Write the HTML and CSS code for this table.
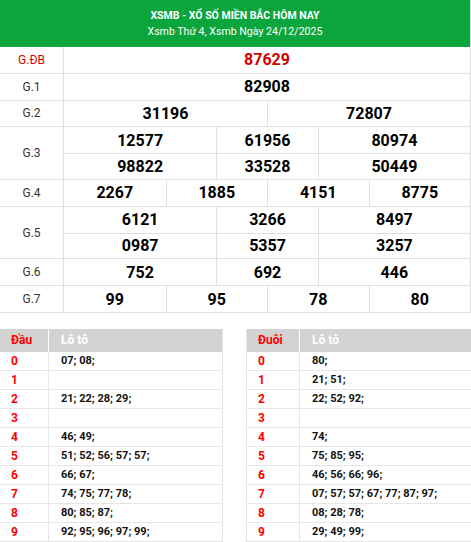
FILE: index.html
```html
<!DOCTYPE html>
<html lang="vi">
<head>
<meta charset="utf-8">
<title>XSMB</title>
<link rel="stylesheet" href="styles.css">
</head>
<body>
<div class="kq">
  <div class="kq-head">
    <div class="kq-title">XSMB - XỔ SỐ MIỀN BẮC HÔM NAY</div>
    <div class="kq-sub">Xsmb Thứ 4, Xsmb Ngày 24/12/2025</div>
  </div>
  <div class="row">
    <div class="label red">G.ĐB</div>
    <div class="nums"><div class="line c1"><span class="num red">87629</span></div></div>
  </div>
  <div class="row">
    <div class="label">G.1</div>
    <div class="nums"><div class="line c1"><span class="num">82908</span></div></div>
  </div>
  <div class="row">
    <div class="label">G.2</div>
    <div class="nums"><div class="line c2"><span class="num">31196</span><span class="num">72807</span></div></div>
  </div>
  <div class="row">
    <div class="label">G.3</div>
    <div class="nums">
      <div class="line c3"><span class="num">12577</span><span class="num">61956</span><span class="num">80974</span></div>
      <div class="line c3"><span class="num">98822</span><span class="num">33528</span><span class="num">50449</span></div>
    </div>
  </div>
  <div class="row">
    <div class="label">G.4</div>
    <div class="nums"><div class="line c4"><span class="num">2267</span><span class="num">1885</span><span class="num">4151</span><span class="num">8775</span></div></div>
  </div>
  <div class="row">
    <div class="label">G.5</div>
    <div class="nums">
      <div class="line c3"><span class="num">6121</span><span class="num">3266</span><span class="num">8497</span></div>
      <div class="line c3"><span class="num">0987</span><span class="num">5357</span><span class="num">3257</span></div>
    </div>
  </div>
  <div class="row">
    <div class="label">G.6</div>
    <div class="nums"><div class="line c3"><span class="num">752</span><span class="num">692</span><span class="num">446</span></div></div>
  </div>
  <div class="row">
    <div class="label">G.7</div>
    <div class="nums"><div class="line c4"><span class="num">99</span><span class="num">95</span><span class="num">78</span><span class="num">80</span></div></div>
  </div>
</div>

<div class="loto-wrap">
  <div class="loto left">
    <div class="th key">Đầu</div><div class="th">Lô tô</div>
    <div class="k">0</div><div class="v">07; 08;</div>
    <div class="k">1</div><div class="v"></div>
    <div class="k">2</div><div class="v">21; 22; 28; 29;</div>
    <div class="k">3</div><div class="v"></div>
    <div class="k">4</div><div class="v">46; 49;</div>
    <div class="k">5</div><div class="v">51; 52; 56; 57; 57;</div>
    <div class="k">6</div><div class="v">66; 67;</div>
    <div class="k">7</div><div class="v">74; 75; 77; 78;</div>
    <div class="k">8</div><div class="v">80; 85; 87;</div>
    <div class="k">9</div><div class="v">92; 95; 96; 97; 99;</div>
  </div>
  <div class="loto right">
    <div class="th key">Đuôi</div><div class="th">Lô tô</div>
    <div class="k">0</div><div class="v">80;</div>
    <div class="k">1</div><div class="v">21; 51;</div>
    <div class="k">2</div><div class="v">22; 52; 92;</div>
    <div class="k">3</div><div class="v"></div>
    <div class="k">4</div><div class="v">74;</div>
    <div class="k">5</div><div class="v">75; 85; 95;</div>
    <div class="k">6</div><div class="v">46; 56; 66; 96;</div>
    <div class="k">7</div><div class="v">07; 57; 57; 67; 77; 87; 97;</div>
    <div class="k">8</div><div class="v">08; 28; 78;</div>
    <div class="k">9</div><div class="v">29; 49; 99;</div>
  </div>
</div>
</body>
</html>
```

FILE: styles.css
```css
* { box-sizing: border-box; }
body {
  margin: 0;
  font-family: Roboto, "Noto Sans", Arial, sans-serif;
  color: #111;
  background: #fff;
}
.kq {
  border-right: 1px solid #dcdcdc;
}
.kq-head {
  background: #0aa53c;
  color: #fff;
  text-align: center;
  padding: 8px 0 7px;
  height: 47px;
}
.kq-title {
  font-size: 10.5px;
  font-weight: 700;
  line-height: 16px;
}
.kq-sub {
  font-size: 10.6px;
  line-height: 16px;
}
.row {
  display: grid;
  grid-template-columns: 64px 1fr;
  border-bottom: 1px solid #e0e0e0;
}
.label {
  display: flex;
  align-items: center;
  justify-content: center;
  font-size: 12px;
  color: #333;
  border-right: 1px solid #e0e0e0;
}
.label.red { color: #e00000; }
.nums { display: flex; flex-direction: column; }
.line {
  display: grid;
  height: 25.8px;
}
.line + .line { border-top: 1px solid #e0e0e0; }
.c1 { grid-template-columns: 1fr; }
.c2 { grid-template-columns: 1fr 1fr; }
.c3 { grid-template-columns: 3fr 2fr 3fr; }
.c4 { grid-template-columns: 1fr 1fr 1fr 1fr; }
.num {
  display: flex;
  align-items: center;
  justify-content: center;
  font-size: 16px;
  font-weight: 700;
  color: #000;
}
.num + .num { border-left: 1px solid #e0e0e0; }
.num.red { color: #d40000; }

.loto-wrap {
  display: flex;
  justify-content: space-between;
  margin-top: 16px;
}
.loto {
  display: grid;
  font-size: 11px;
  font-weight: 700;
}
.loto.left {
  width: 223px;
  grid-template-columns: 49px 1fr;
  border-right: 1px solid #e6e6e6;
}
.loto.right {
  width: 225px;
  grid-template-columns: 53px 1fr;
  border-left: 1px solid #e6e6e6;
}
.th {
  background: #d3d3d3;
  color: #fff;
  height: 23px;
  display: flex;
  align-items: center;
  padding-left: 12px;
  font-size: 12px;
}
.th.key {
  color: #f00;
  padding-left: 11px;
  border-right: 1px solid #fff;
}
.k, .v {
  height: 19px;
  border-bottom: 1px solid #e6e6e6;
  display: flex;
  align-items: center;
}
.k {
  color: #f00;
  padding-left: 11px;
  border-right: 1px solid #e6e6e6;
  font-size: 12px;
}
.v {
  color: #111;
  padding-left: 12px;
}
```
